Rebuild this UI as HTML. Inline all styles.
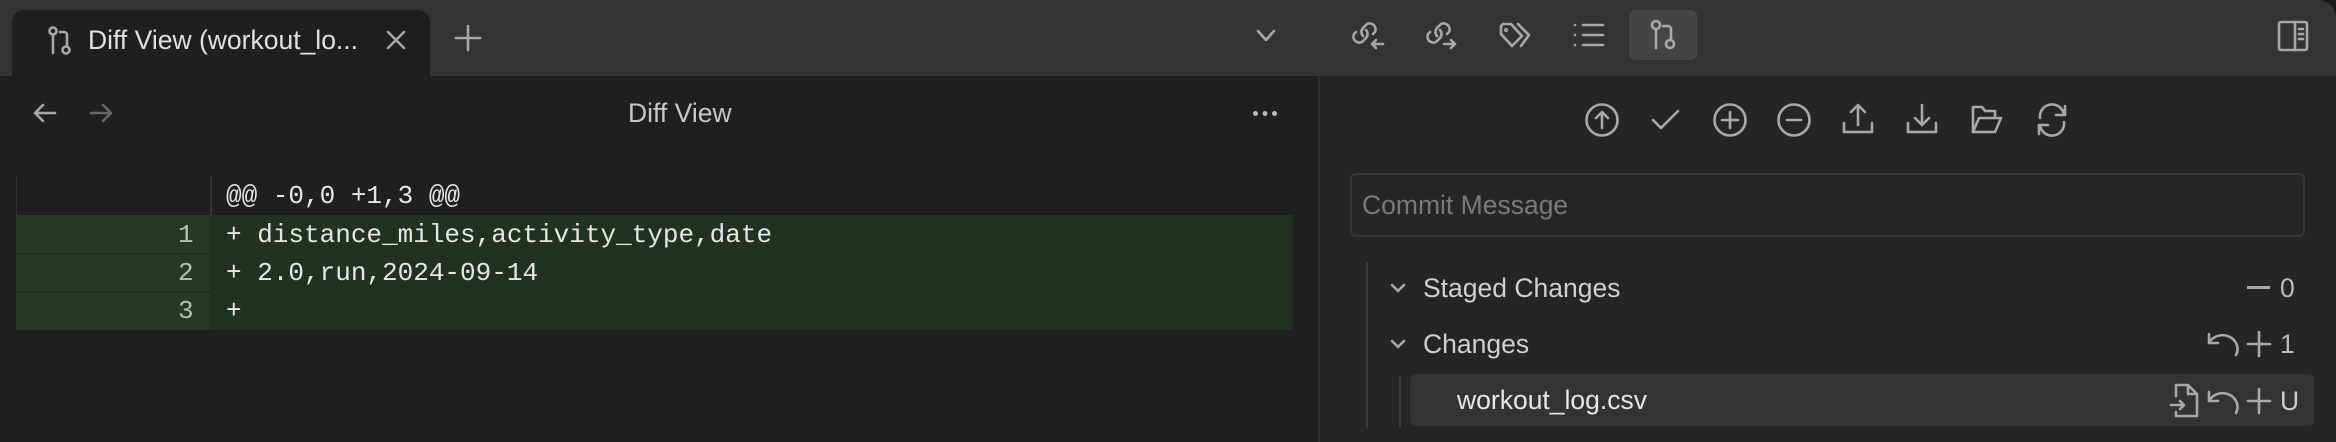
<!DOCTYPE html>
<html><head><meta charset="utf-8"><style>
*{margin:0;padding:0;box-sizing:border-box}
body{width:2336px;height:442px;overflow:hidden;background:#1a1a1a;font-family:"Liberation Sans",sans-serif;position:relative}
.a{position:absolute}
.t{color:#d0d0d0;font-size:26.5px;white-space:nowrap;line-height:1}
.m{font-family:"Liberation Mono",monospace;font-size:26px;color:#e6e6e6;white-space:pre;line-height:1}
svg{position:absolute;overflow:visible}
svg *{fill:none;stroke:#a8a8a8;stroke-width:2.6;stroke-linecap:round;stroke-linejoin:round}
</style></head><body>
<div class="a" style="left:0;top:0;width:2336px;height:442px;background:#252525;border-top-right-radius:18px"></div>
<!-- top bar -->
<div class="a" style="left:0;top:0;width:2336px;height:76px;background:#333;border-top-right-radius:18px"></div>
<div class="a" style="left:12px;top:10px;width:418px;height:66px;background:#1f1f1f;border-radius:12px 12px 0 0"></div>
<svg style="left:48px;top:26px" width="22" height="30" viewBox="0 0 22 30"><circle cx="5" cy="5" r="3.5"/><path d="M5 9V27"/><path d="M12 6h4a3 3 0 0 1 3 3v11"/><circle cx="18" cy="24" r="3.5"/></svg>
<div class="a t" style="left:88px;top:27px;color:#e0e0e0">Diff View (workout_lo...</div>
<svg style="left:387px;top:31px" width="18" height="18"><path d="M1 1L17 17M17 1L1 17"/></svg>
<svg style="left:456px;top:26px" width="24" height="24"><path d="M12 0V24M0 12H24"/></svg>
<svg style="left:1257px;top:30px" width="18" height="12"><path d="M1 1L9 10L17 1"/></svg>
<!-- right top icons -->
<svg style="left:1350px;top:18px" width="34" height="32" viewBox="0 0 34 32"><path d="M13 18a6 6 0 0 1 0-8l4-4a6 6 0 0 1 8 8l-2 2"/><path d="M16 12a6 6 0 0 1 0 8l-4 4a6 6 0 0 1-8-8l2-2"/><path d="M33 26H22M26 22l-4 4 4 4"/></svg>
<svg style="left:1424px;top:18px" width="34" height="32" viewBox="0 0 34 32"><path d="M13 18a6 6 0 0 1 0-8l4-4a6 6 0 0 1 8 8l-2 2"/><path d="M16 12a6 6 0 0 1 0 8l-4 4a6 6 0 0 1-8-8l2-2"/><path d="M20 26H31M27 22l4 4-4 4"/></svg>
<svg style="left:1499px;top:22px" width="34" height="26" viewBox="0 0 34 26"><path d="M2 4V12L13 24L23 14L12 2H4Z"/><circle cx="7" cy="8" r="0.8"/><path d="M19 2L30 13L22 24"/></svg>
<svg style="left:1574px;top:24px" width="30" height="22" viewBox="0 0 30 22"><path d="M1 1h0M1 11h0M1 21h0M9 1H29M9 11H29M9 21H29"/></svg>
<div class="a" style="left:1629px;top:10px;width:68px;height:50px;background:#444;border-radius:6px"></div>
<svg style="left:1650px;top:20px" width="26" height="30" viewBox="0 0 26 30"><circle cx="6" cy="5" r="4"/><path d="M6 9V28"/><path d="M13 6h5a3 3 0 0 1 3 3v11"/><circle cx="20" cy="24" r="4"/></svg>
<svg style="left:2278px;top:21px" width="30" height="30" viewBox="0 0 30 30"><rect x="1" y="1" width="28" height="28" rx="2"/><path d="M17 1V29M21 8h4M21 13h4M21 18h4"/></svg>
<!-- left pane -->
<div class="a" style="left:0;top:76px;width:1318px;height:366px;background:#1f1f1f"></div>
<div class="a" style="left:1318px;top:76px;width:2px;height:366px;background:#2e2e2e"></div>
<svg style="left:34px;top:104px" width="22" height="18"><path d="M21 9H1M9 1L1 9l8 8"/></svg>
<svg style="left:90px;top:104px" width="22" height="18"><path d="M1 9H21M13 1l8 8-8 8" style="stroke:#666"/></svg>
<div class="a t" style="left:628px;top:100px;color:#c8c8c8">Diff View</div>
<div class="a" style="left:1253px;top:111px;width:24px;height:5px;background:radial-gradient(circle at 2.5px 2.5px,#bbb 2.3px,transparent 2.6px) 0 0/9.5px 5px repeat-x"></div>
<!-- diff -->
<div class="a" style="left:16px;top:176px;width:1px;height:154px;background:#333"></div>
<div class="a" style="left:210px;top:176px;width:2px;height:154px;background:#333"></div>
<div class="a" style="left:16px;top:215px;width:1277px;height:115px;background:#233122"></div>
<div class="a" style="left:16px;top:215px;width:194px;height:115px;background:#253924"></div>
<div class="a" style="left:16px;top:253px;width:194px;height:2px;background:#1f2f1e"></div>
<div class="a" style="left:16px;top:291px;width:194px;height:2px;background:#1f2f1e"></div>
<div class="a m" style="left:226px;top:183px">@@ -0,0 +1,3 @@</div>
<div class="a m" style="left:178px;top:222px;color:#bbb">1</div>
<div class="a m" style="left:178px;top:260px;color:#bbb">2</div>
<div class="a m" style="left:178px;top:298px;color:#bbb">3</div>
<div class="a m" style="left:226px;top:222px">+ distance_miles,activity_type,date</div>
<div class="a m" style="left:226px;top:260px">+ 2.0,run,2024-09-14</div>
<div class="a m" style="left:226px;top:298px">+</div>
<!-- right toolbar -->
<svg style="left:1586px;top:104px" width="32" height="32"><circle cx="16" cy="16" r="15.5"/><path d="M16 24V8M10 14l6-6 6 6"/></svg>
<svg style="left:1652px;top:110px" width="28" height="20"><path d="M1 10l8 8L26 1"/></svg>
<svg style="left:1714px;top:104px" width="32" height="32"><circle cx="16" cy="16" r="15.5"/><path d="M16 8V24M8 16H24"/></svg>
<svg style="left:1778px;top:104px" width="32" height="32"><circle cx="16" cy="16" r="15.5"/><path d="M9 16H23"/></svg>
<svg style="left:1843px;top:103px" width="30" height="32"><path d="M15 22V2M8 9l7-7 7 7M1 20v9h28v-9"/></svg>
<svg style="left:1907px;top:103px" width="30" height="32"><path d="M15 2V22M8 15l7 7 7-7M1 20v9h28v-9"/></svg>
<svg style="left:1970px;top:104px" width="32" height="30"><path d="M3 28H25L31 14H9L3 28Z"/><path d="M3 28V3H12l3 4H25v7"/></svg>
<svg style="left:2036px;top:104px" width="32" height="32"><path d="M4 14A12 12 0 0 1 28 11M29 2v9h-9"/><path d="M28 18A12 12 0 0 1 4 21M3 30v-9h9"/></svg>
<!-- commit box -->
<div class="a" style="left:1350px;top:173px;width:955px;height:64px;border:2px solid #353535;border-radius:6px;background:#262626"></div>
<div class="a t" style="left:1362px;top:192px;color:#7a7a7a">Commit Message</div>
<!-- tree -->
<div class="a" style="left:1366px;top:262px;width:2px;height:166px;background:#3a3a3a"></div>
<svg style="left:1391px;top:284px" width="14" height="9"><path d="M1 1l6 6 6-6"/></svg>
<div class="a t" style="left:1423px;top:275px">Staged Changes</div>
<div class="a" style="left:2247px;top:286px;width:23px;height:3px;background:#aaa"></div>
<div class="a t" style="left:2280px;top:275px;color:#bbb">0</div>
<svg style="left:1391px;top:340px" width="14" height="9"><path d="M1 1l6 6 6-6"/></svg>
<div class="a t" style="left:1423px;top:331px">Changes</div>
<svg style="left:2207px;top:333px" width="32" height="24"><path d="M2 1v9h9M2 10A13 12 0 0 1 29 22"/></svg>
<svg style="left:2247px;top:331px" width="24" height="26"><path d="M12 1V25M1 13H23"/></svg>
<div class="a t" style="left:2280px;top:331px;color:#bbb">1</div>
<div class="a" style="left:1399px;top:376px;width:2px;height:52px;background:#3a3a3a"></div>
<div class="a" style="left:1410px;top:374px;width:904px;height:52px;background:#333;border-radius:6px"></div>
<div class="a t" style="left:1457px;top:387px;color:#e6e6e6">workout_log.csv</div>
<svg style="left:2170px;top:384px" width="30" height="34"><path d="M6 12V1H18l9 9V32H6v-4M18 1v9h9M1 21h13M10 17l4 4-4 4"/></svg>
<svg style="left:2207px;top:391px" width="32" height="24"><path d="M2 1v9h9M2 10A13 12 0 0 1 29 22"/></svg>
<svg style="left:2247px;top:388px" width="24" height="26"><path d="M12 1V25M1 13H23"/></svg>
<div class="a t" style="left:2280px;top:388px;color:#ccc">U</div>
</body></html>
